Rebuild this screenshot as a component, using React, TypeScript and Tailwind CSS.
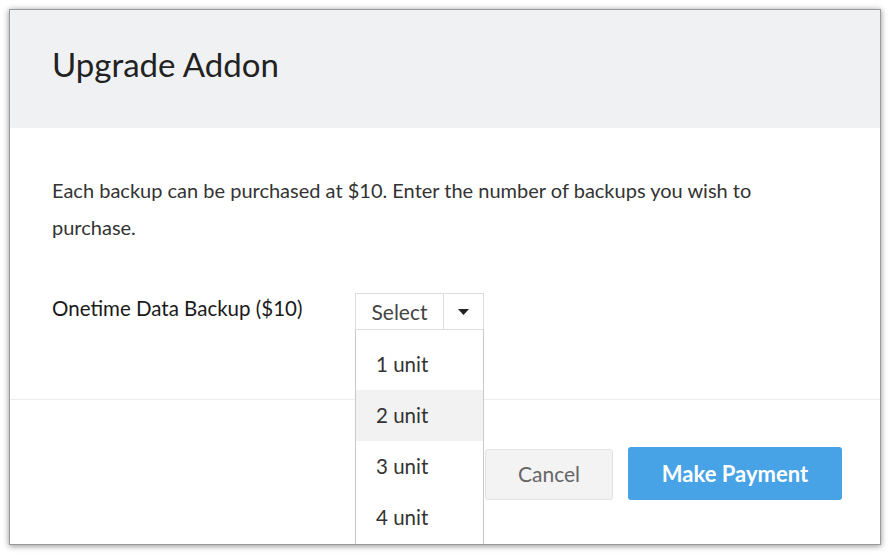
import { useState } from "react";

const units = ["1 unit", "2 unit", "3 unit", "4 unit"];

export default function App() {
  const [hovered, setHovered] = useState(1);

  return (
    <div className="min-h-screen bg-white p-[9px]" style={{ fontFamily: "Lato, 'Open Sans', sans-serif" }}>
      <div className="w-[872px] h-[536px] bg-white overflow-hidden border border-[#9a9a9a] shadow-[0_1px_6px_rgba(0,0,0,0.45)] text-[#333]">
        {/* Header */}
        <div className="h-[118px] bg-[#f0f1f3] px-[42px] flex items-center">
          <h1 className="text-[33px] text-[#222] pb-[8px]">Upgrade Addon</h1>
        </div>

        {/* Body */}
        <div className="h-[271px] px-[42px] pt-[44px]">
          <p className="max-w-[730px] text-[20px] leading-[37px] text-[#333]">
            Each backup can be purchased at $10. Enter the number of backups you wish to purchase.
          </p>
          <div className="flex items-start mt-[47px]">
            <div className="w-[303px] text-[20.5px] text-[#1a1a1a]">
              Onetime Data Backup ($10)
            </div>
            <div className="relative w-[129px]">
              <div className="h-[37px] flex border border-[#dcdcdc] bg-white">
                <div className="flex-1 flex items-center justify-center text-[21px] text-[#444] border-r border-[#dcdcdc]">
                  Select
                </div>
                <div className="w-[39px] flex items-center justify-center">
                  <svg width="11" height="6" viewBox="0 0 11 6">
                    <path d="M0 0h11L5.5 6z" fill="#222" />
                  </svg>
                </div>
              </div>
              <ul className="absolute left-0 top-full w-full bg-white border border-t-0 border-[#c9c9c9] pt-[9px] pb-[10px] z-10">
                {units.map((u, i) => (
                  <li
                    key={u}
                    onMouseEnter={() => setHovered(i)}
                    className={`h-[51px] flex items-center pl-[20px] text-[20.5px] text-[#333] cursor-pointer ${
                      hovered === i ? "bg-[#f2f2f2]" : ""
                    }`}
                  >
                    {u}
                  </li>
                ))}
              </ul>
            </div>
          </div>
        </div>

        {/* Footer */}
        <div className="h-[147px] border-t border-[#ededed] flex items-center justify-end gap-[15px] pr-[38px]">
          <button className="w-[128px] h-[51px] mt-[2px] bg-[#f3f3f3] border border-[#e3e3e3] rounded-[3px] text-[21px] text-[#666]">
            Cancel
          </button>
          <button className="w-[214px] h-[53px] bg-[#47a3e6] rounded-[3px] text-[22px] font-bold text-white">
            Make Payment
          </button>
        </div>
      </div>
    </div>
  );
}
